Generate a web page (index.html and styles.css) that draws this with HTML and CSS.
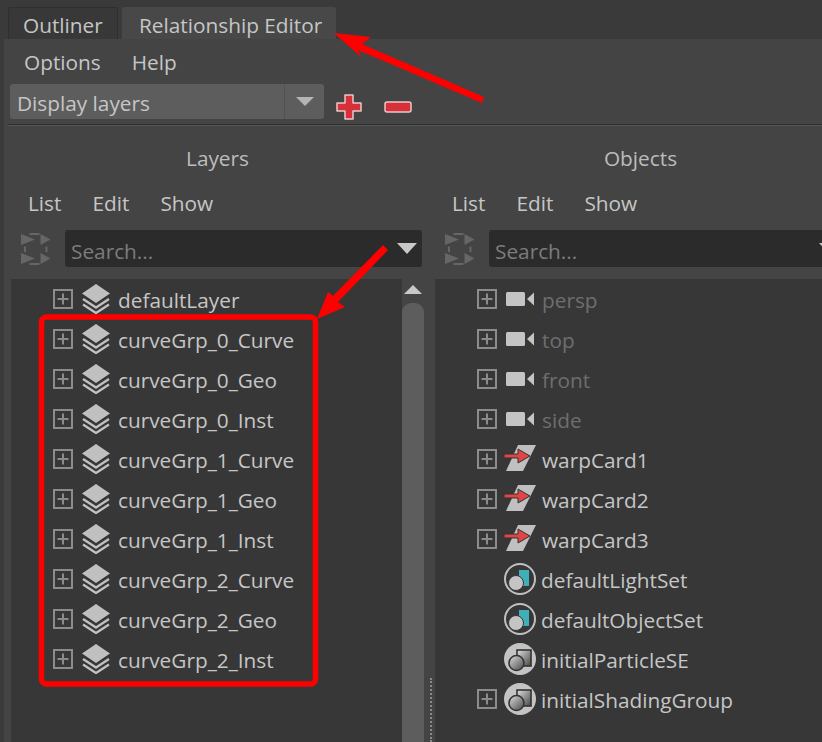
FILE: index.html
```html
<!DOCTYPE html>
<html lang="en">
	<head>
		<meta charset="UTF-8">
		<title>Relationship Editor</title>
		<link rel="stylesheet" href="styles.css">
	</head>
	<body>
	<svg class="defs" width="0" height="0">
		<defs>
			<linearGradient id="shade" x1="0" y1="0" x2="1" y2="1">
				<stop offset="0" stop-color="#e0e0e0"/>
				<stop offset="1" stop-color="#454545"/>
			</linearGradient>
			<symbol id="i-plus" viewBox="0 0 20 20">
				<rect x="1" y="1" width="18" height="18" fill="none" stroke="#8c8c8c" stroke-width="2"/>
				<path d="M10 4.500v11M4.500 10h11" stroke="#8c8c8c" stroke-width="2"/>
			</symbol>
			<symbol id="i-layer" viewBox="0 0 30 30">
				<path d="M15 0 L29 9.500 L15 19 L1 9.500 Z" fill="#c0c0c0"/>
				<path d="M2 15 L15 23.500 L28 15" fill="none" stroke="#c0c0c0" stroke-width="2.400"/>
				<path d="M2 20.500 L15 29 L28 20.500" fill="none" stroke="#c0c0c0" stroke-width="2.400"/>
			</symbol>
			<symbol id="i-camera" viewBox="0 0 30 30">
				<rect x="1" y="8" width="19" height="14" rx="1.500" fill="#c4c4c4"/>
				<path d="M22 15 L29 8.500 V21.500 Z" fill="#c4c4c4"/>
			</symbol>
			<symbol id="i-warp" viewBox="0 0 30 30" overflow="visible">
				<path d="M13 1 H31 L18 27 H1 Z" fill="#c0c0c0"/>
				<path d="M-1 10 H13 V5 L25 12 L13 19 V14 H-1 Z" fill="#e04545" stroke="#333" stroke-width="1"/>
			</symbol>
			<symbol id="i-set" viewBox="0 0 32 32">
				<circle cx="16" cy="16" r="15" fill="none" stroke="#c0c0c0" stroke-width="2"/>
				<path d="M15 7 H25 V23 H18 V15 H15 Z" fill="#3fb0b8"/>
				<circle cx="12" cy="20" r="7.500" fill="#c4c4c4" stroke="#373737" stroke-width="1"/>
			</symbol>
			<symbol id="i-shade" viewBox="0 0 32 32">
				<circle cx="16" cy="16" r="16" fill="#c4c4c4"/>
				<rect x="13" y="7" width="14" height="16" fill="url(#shade)" stroke="#333" stroke-width="1.600"/>
				<circle cx="12.500" cy="20" r="7.500" fill="url(#shade)" stroke="#333" stroke-width="1.600"/>
			</symbol>
			<symbol id="i-isolate" viewBox="0 0 31 32">
				<path d="M1 1 L15 6.500 L1 12 Z M20.500 1 L30.500 6.500 L20.500 12 Z M1 20 L15 25.500 L1 31 Z M20.500 20 L30.500 25.500 L20.500 31 Z" fill="#666666"/>
				<path d="M9.500 1 H19.500 M9.500 31 H19.500 M5 13.500 V19 M26.500 13.500 V19" stroke="#666666" stroke-width="2" fill="none"/>
			</symbol>
		</defs>
	</svg>

	<div class="tabs">
		<div class="tab">Outliner</div>
		<div class="tab tab-active">Relationship Editor</div>
	</div>

	<div class="panel">
		<div class="menu menu-top">
			<span>Options</span>
			<span>Help</span>
		</div>
		<div class="toolbar">
			<div class="combo">
				<span class="combo-text">Display layers</span>
				<span class="combo-btn"><i class="tri tri-combo"></i></span>
			</div>
			<svg class="btn-add" width="28" height="28" viewBox="0 0 28 28">
				<path d="M10 2 H18 V10 H26 V18 H18 V26 H10 V18 H2 V10 H10 Z" fill="#d8303a" stroke="#e8c8c8" stroke-width="1.500" stroke-linejoin="round"/>
			</svg>
			<svg class="btn-remove" width="28" height="14" viewBox="0 0 28 14">
				<rect x="1" y="2" width="26" height="10" rx="2" fill="#d8303a" stroke="#e8c8c8" stroke-width="1.500"/>
			</svg>
		</div>
		<div class="sep"></div>

		<div class="columns">
			<div class="col col-left">
				<div class="col-title">Layers</div>
				<div class="menu col-menu">
					<span>List</span>
					<span>Edit</span>
					<span>Show</span>
				</div>
				<div class="search-row">
					<svg class="isolate" width="31" height="32"><use href="#i-isolate"/></svg>
					<div class="search">
						<span>Search...</span>
						<i class="tri tri-search"></i>
					</div>
				</div>
				<div class="list">
					<div class="row"><svg class="plus"><use href="#i-plus"/></svg><svg class="icon"><use href="#i-layer"/></svg><span>defaultLayer</span></div>
					<div class="row"><svg class="plus"><use href="#i-plus"/></svg><svg class="icon"><use href="#i-layer"/></svg><span>curveGrp_0_Curve</span></div>
					<div class="row"><svg class="plus"><use href="#i-plus"/></svg><svg class="icon"><use href="#i-layer"/></svg><span>curveGrp_0_Geo</span></div>
					<div class="row"><svg class="plus"><use href="#i-plus"/></svg><svg class="icon"><use href="#i-layer"/></svg><span>curveGrp_0_Inst</span></div>
					<div class="row"><svg class="plus"><use href="#i-plus"/></svg><svg class="icon"><use href="#i-layer"/></svg><span>curveGrp_1_Curve</span></div>
					<div class="row"><svg class="plus"><use href="#i-plus"/></svg><svg class="icon"><use href="#i-layer"/></svg><span>curveGrp_1_Geo</span></div>
					<div class="row"><svg class="plus"><use href="#i-plus"/></svg><svg class="icon"><use href="#i-layer"/></svg><span>curveGrp_1_Inst</span></div>
					<div class="row"><svg class="plus"><use href="#i-plus"/></svg><svg class="icon"><use href="#i-layer"/></svg><span>curveGrp_2_Curve</span></div>
					<div class="row"><svg class="plus"><use href="#i-plus"/></svg><svg class="icon"><use href="#i-layer"/></svg><span>curveGrp_2_Geo</span></div>
					<div class="row"><svg class="plus"><use href="#i-plus"/></svg><svg class="icon"><use href="#i-layer"/></svg><span>curveGrp_2_Inst</span></div>
					<div class="scrollbar">
						<i class="tri tri-up"></i>
						<div class="thumb"></div>
					</div>
				</div>
			</div>

			<div class="splitter"><div class="grip"></div></div>

			<div class="col col-right">
				<div class="col-title">Objects</div>
				<div class="menu col-menu">
					<span>List</span>
					<span>Edit</span>
					<span>Show</span>
				</div>
				<div class="search-row">
					<svg class="isolate" width="31" height="32"><use href="#i-isolate"/></svg>
					<div class="search">
						<span>Search...</span>
						<i class="tri tri-search"></i>
					</div>
				</div>
				<div class="list">
					<div class="row dim"><svg class="plus"><use href="#i-plus"/></svg><svg class="icon"><use href="#i-camera"/></svg><span>persp</span></div>
					<div class="row dim"><svg class="plus"><use href="#i-plus"/></svg><svg class="icon"><use href="#i-camera"/></svg><span>top</span></div>
					<div class="row dim"><svg class="plus"><use href="#i-plus"/></svg><svg class="icon"><use href="#i-camera"/></svg><span>front</span></div>
					<div class="row dim"><svg class="plus"><use href="#i-plus"/></svg><svg class="icon"><use href="#i-camera"/></svg><span>side</span></div>
					<div class="row"><svg class="plus"><use href="#i-plus"/></svg><svg class="icon"><use href="#i-warp"/></svg><span>warpCard1</span></div>
					<div class="row"><svg class="plus"><use href="#i-plus"/></svg><svg class="icon"><use href="#i-warp"/></svg><span>warpCard2</span></div>
					<div class="row"><svg class="plus"><use href="#i-plus"/></svg><svg class="icon"><use href="#i-warp"/></svg><span>warpCard3</span></div>
					<div class="row"><i class="plus"></i><svg class="icon icon-lg"><use href="#i-set"/></svg><span>defaultLightSet</span></div>
					<div class="row"><i class="plus"></i><svg class="icon icon-lg"><use href="#i-set"/></svg><span>defaultObjectSet</span></div>
					<div class="row"><i class="plus"></i><svg class="icon icon-lg"><use href="#i-shade"/></svg><span>initialParticleSE</span></div>
					<div class="row"><svg class="plus"><use href="#i-plus"/></svg><svg class="icon icon-lg"><use href="#i-shade"/></svg><span>initialShadingGroup</span></div>
				</div>
			</div>
		</div>
	</div>

	<!-- annotations drawn on top of the screenshot -->
	<svg class="notes" width="822" height="742" viewBox="0 0 822 742">
		<rect x="41.500" y="317" width="274" height="367" rx="5" fill="none" stroke="#ff0000" stroke-width="5.500"/>
		<path d="M334 33 L371 37 L362 44 L484 97 L482 103 L358 50 L361 57 Z" fill="#ff0000"/>
		<path d="M317 319 L328 292 L333 296 L383 245 L388 250 L338 302 L345 307 Z" fill="#ff0000"/>
	</svg>
	</body>
</html>
```

FILE: styles.css
```css
html, body {
	margin: 0;
	height: 742px;
	overflow: hidden;
}
body {
	position: relative;
	display: flex;
	flex-direction: column;
	background-color: #3a3a3a;
	color: #c6c6c6;
	font-family: 'Open Sans', 'Noto Sans', sans-serif;
	font-size: 20.8px;
	line-height: 28px;
}
.defs {
	position: absolute;
}

/* tabs */
.tabs {
	display: flex;
	gap: 4px;
	height: 32px;
	padding: 7px 0 0 8px;
}
.tab {
	width: 110px;
	box-sizing: border-box;
	padding: 3px 0 0 14px;
	background-color: #383838;
	border: 1px solid #2f2f2f;
	border-bottom: 0;
	border-radius: 3px 3px 0 0;
}
.tab-active {
	width: 214px;
	padding-left: 16px;
	background-color: #484848;
	border-color: #484848;
}

/* panel */
.panel {
	flex: 1;
	display: flex;
	flex-direction: column;
	min-height: 0;
	margin-left: 4px;
	background-color: #444444;
}
.menu {
	display: flex;
}
.menu-top {
	gap: 31px;
	height: 45px;
	padding: 9px 0 0 20px;
	box-sizing: border-box;
}
.toolbar {
	display: flex;
	height: 40px;
	padding-left: 6px;
}
.combo {
	display: flex;
	width: 314px;
	height: 35px;
	background-color: #5d5d5d;
	border-radius: 3px;
}
.combo-text {
	flex: 1;
	padding: 5px 0 0 7px;
}
.combo-btn {
	display: flex;
	align-items: center;
	justify-content: center;
	width: 39px;
	border-left: 1px solid #525252;
}
.btn-add {
	margin: 9px 0 0 11px;
}
.btn-remove {
	margin: 16px 0 0 21px;
}
.sep {
	height: 1px;
	margin-left: 4px;
	background-color: #2e2e2e;
	border-bottom: 1px solid #555555;
}

/* triangles */
.tri {
	display: block;
	width: 0;
	height: 0;
	border-style: solid;
	border-color: transparent;
}
.tri-combo {
	border-width: 9px 9px 0;
	border-top-color: #b4b4b4;
}
.tri-search {
	margin-right: 5px;
	border-width: 11px 10px 0;
	border-top-color: #c8c8c8;
}
.tri-up {
	border-width: 0 9px 9px;
	border-bottom-color: #c8c8c8;
}

/* columns */
.columns {
	flex: 1;
	display: flex;
	min-height: 0;
	padding-left: 7px;
}
.col {
	display: flex;
	flex-direction: column;
	flex: none;
	width: 413px;
}
.col-right {
	width: 411px;
}
.col-title {
	height: 62px;
	padding-top: 2px;
	box-sizing: border-box;
	line-height: 60px;
	text-align: center;
	color: #bcbcbc;
}
.col-menu {
	gap: 31px;
	height: 28px;
	margin-bottom: 14px;
	padding: 1px 0 0 17px;
	box-sizing: content-box;
	height: 27px;
}
.search-row {
	display: flex;
	align-items: center;
	gap: 14px;
	height: 37px;
	margin-bottom: 12px;
	padding: 0 2px 0 9px;
}
.search {
	flex: 1;
	display: flex;
	align-items: center;
	justify-content: space-between;
	height: 37px;
	padding-left: 6px;
	background-color: #2b2b2b;
	border-radius: 3px;
	color: #7c7c7c;
}
.search span {
	padding-top: 5px;
}
.splitter {
	flex: none;
	width: 11px;
	position: relative;
}
.grip {
	position: absolute;
	left: 0;
	bottom: 0;
	height: 64px;
	width: 0;
	border-left: 2px dotted #8a8a8a;
	margin-left: 6px;
}

/* lists */
.list {
	flex: 1;
	position: relative;
	min-height: 0;
	background-color: #373737;
}
.row {
	display: flex;
	align-items: center;
	gap: 8px;
	height: 40px;
	padding-left: 42px;
}
.row span {
	padding-top: 2px;
}
.dim {
	color: #6e6e6e;
}
.plus {
	flex: none;
	width: 20px;
	height: 20px;
}
.icon {
	flex: none;
	width: 30px;
	height: 30px;
	overflow: visible;
}
.icon-lg {
	width: 32px;
	height: 32px;
	margin: 0 -2px 0 -1px;
}
.row .icon + span {
	margin-left: -1px;
}
.scrollbar {
	position: absolute;
	top: 0;
	right: 0;
	bottom: 0;
	display: flex;
	flex-direction: column;
	align-items: center;
	width: 22px;
	padding-top: 6px;
	box-sizing: border-box;
	background-color: #444444;
}
.thumb {
	flex: 1;
	width: 22px;
	margin-top: 9px;
	background-color: #5d5d5d;
	border-radius: 9px 9px 0 0;
}

/* red marks over the picture */
.notes {
	position: absolute;
	top: 0;
	left: 0;
	pointer-events: none;
}
```
